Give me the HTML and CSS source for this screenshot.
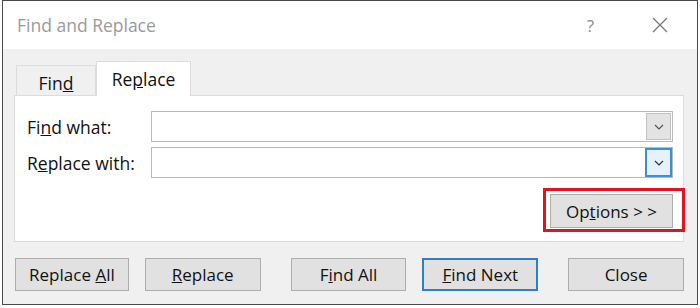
FILE: index.html
```html
<!DOCTYPE html>
<html lang="en">
<head>
    <meta charset="UTF-8">
    <title>Find and Replace</title>
    <link rel="stylesheet" href="styles.css">
</head>
<body>
    <div class="window">
        <div class="titlebar">
            <span class="title">Find and Replace</span>
            <span class="help">?</span>
            <span class="close-x">
                <svg width="16" height="16" viewBox="0 0 16 16"><path d="M1 1L15 15M15 1L1 15" stroke="#7a7a7a" stroke-width="1.3" fill="none"/></svg>
            </span>
        </div>
        <div class="dialog-body">
            <div class="tabs">
                <div class="tab">Fin<u>d</u></div>
                <div class="tab active">Re<u>p</u>lace</div>
            </div>
            <div class="panel">
                <div class="field-row">
                    <label class="field-label">Fi<u>n</u>d what:</label>
                    <div class="combo">
                        <div class="combo-input"></div>
                        <div class="combo-drop">
                            <svg width="10" height="6" viewBox="0 0 10 6"><path d="M1 1L5 5L9 1" stroke="#555" stroke-width="1.2" fill="none"/></svg>
                        </div>
                    </div>
                </div>
                <div class="field-row second">
                    <label class="field-label">R<u>e</u>place with:</label>
                    <div class="combo focused">
                        <div class="combo-input"></div>
                        <div class="combo-drop">
                            <svg width="10" height="6" viewBox="0 0 10 6"><path d="M1 1L5 5L9 1" stroke="#333" stroke-width="1.2" fill="none"/></svg>
                        </div>
                    </div>
                </div>
                <div class="options-row">
                    <div class="options-wrap">
                        <button class="btn options-btn">Op<u>t</u>ions &gt; &gt;</button>
                        <div class="highlight"></div>
                    </div>
                </div>
            </div>
            <div class="actions">
                <button class="btn">Replace <u>A</u>ll</button>
                <button class="btn"><u>R</u>eplace</button>
                <button class="btn gap-left">F<u>i</u>nd All</button>
                <button class="btn default"><u>F</u>ind Next</button>
                <button class="btn gap-left">Close</button>
            </div>
        </div>
    </div>
</body>
</html>
```

FILE: styles.css
```css
body {
    margin: 0;
    background: #ffffff;
    font-family: 'Open Sans', 'Noto Sans', sans-serif;
    color: #111;
}

.window {
    margin-left: 2px;
    width: 696px;
    height: 305px;
    border: 1px solid #4a4a4a;
    box-sizing: border-box;
    background: #f0f0f0;
}

.titlebar {
    height: 48px;
    background: #ffffff;
    display: flex;
    align-items: center;
    padding-left: 14px;
}

.title {
    font-size: 17.5px;
    color: #9a9a9a;
    flex: 1;
}

.help {
    font-size: 17px;
    color: #8a8a8a;
    margin-right: 58px;
}

.close-x {
    display: flex;
    margin-right: 29px;
}

.dialog-body {
    padding: 12px 13px 0 11px;
}

.tabs {
    display: flex;
    align-items: flex-end;
    height: 34px;
    padding-left: 2px;
}

.tab {
    font-size: 17.5px;
    height: 30px;
    width: 80px;
    box-sizing: border-box;
    border: 1px solid #dcdcdc;
    border-bottom: none;
    display: flex;
    justify-content: center;
    align-items: center;
    padding-top: 4px;
    color: #111;
}

.tab.active {
    background: #ffffff;
    width: 95px;
    padding-top: 0;
    position: relative;
    z-index: 1;
    margin-bottom: -1px;
    height: 35px;
}

.panel {
    background: #ffffff;
    border: 1px solid #dcdcdc;
    height: 147px;
    box-sizing: border-box;
    padding: 15px 10px 0 12px;
}

.field-row {
    display: flex;
    align-items: center;
    height: 31px;
}

.field-row.second {
    margin-top: 5px;
}

.field-label {
    font-size: 17.5px;
    width: 124px;
    color: #111;
}

.combo {
    flex: 1;
    display: flex;
    height: 31px;
    border: 1px solid #b9b9b9;
    box-sizing: border-box;
    background: #fff;
}

.combo-input {
    flex: 1;
}

.combo-drop {
    width: 25px;
    margin: 1px;
    background: #e3e3e3;
    border: 1px solid #c2c2c2;
    box-sizing: border-box;
    display: flex;
    align-items: center;
    justify-content: center;
}

.combo.focused .combo-drop {
    margin: 0;
    width: 27px;
    background: #e5f1fb;
    border: 2px solid #3c8fd6;
}

.options-row {
    display: flex;
    justify-content: flex-end;
    margin-top: 16px;
}

.options-wrap {
    position: relative;
}

.btn {
    font-family: 'Open Sans', 'Noto Sans', sans-serif;
    font-size: 17px;
    color: #111;
    background: #e1e1e1;
    border: 1px solid #adadad;
    height: 33px;
    width: 116px;
    padding: 0;
    box-sizing: border-box;
}

.options-btn {
    width: 123px;
    height: 34px;
}

.highlight {
    position: absolute;
    left: -7px;
    top: -6px;
    right: -12px;
    bottom: -4px;
    border: 3px solid #e0141e;
}

.actions {
    display: flex;
    margin-top: 16px;
    padding-left: 1px;
}

.actions .btn + .btn {
    margin-left: 16px;
}

.actions .btn:first-child {
    width: 114px;
}

.actions .btn.gap-left {
    margin-left: 30px;
}

.btn.default {
    border: 2px solid #2c7fd0;
}
```
